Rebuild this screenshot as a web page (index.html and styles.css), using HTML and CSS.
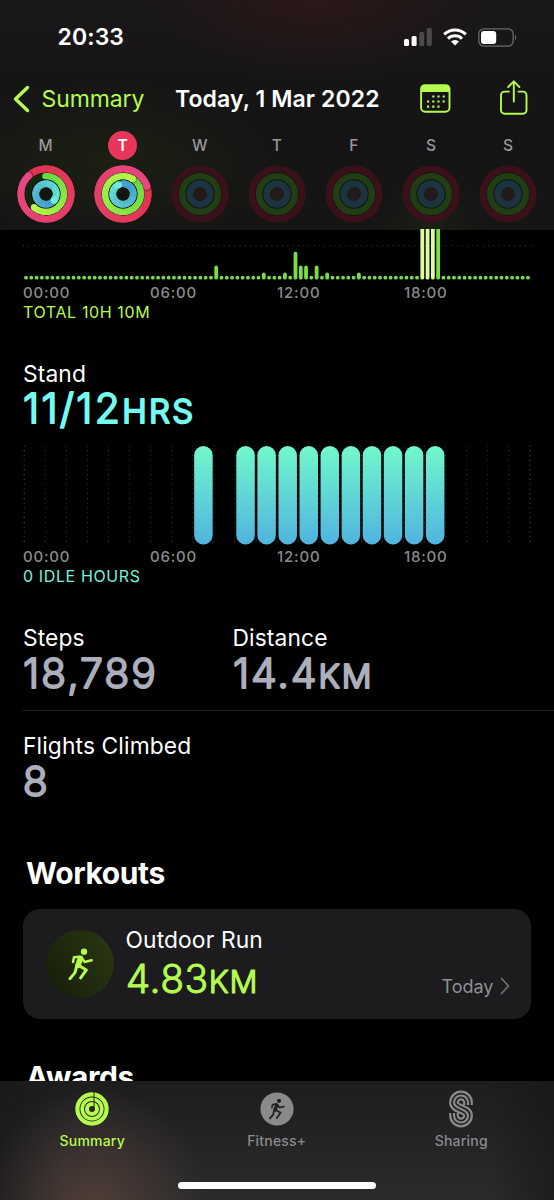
FILE: index.html
```html
<!DOCTYPE html>
<html lang="en">
<head>
<meta charset="utf-8">
<title>Activity</title>
<link rel="stylesheet" href="styles.css">
</head>
<body>
<svg width="0" height="0" class="defs">
  <symbol id="runner" viewBox="0 0 80 97">
    <circle cx="51" cy="11" r="9.5" fill="currentColor"/>
    <g fill="none" stroke="currentColor" stroke-linecap="round" stroke-linejoin="round">
      <path d="M40 31 L33 52" stroke-width="17"/>
      <path d="M37 26 L21 28 L18 42" stroke-width="7.5"/>
      <path d="M42 27 L53 42 L74 37" stroke-width="7.5"/>
      <path d="M36 53 L58 66 L41 90" stroke-width="9"/>
      <path d="M29 54 L24 74 L9 92" stroke-width="9"/>
    </g>
  </symbol>
</svg>
<div class="screen">
  <header class="header">
    <div class="status">
      <span class="time">20:33</span>
      <div class="status-icons">
        <svg width="28" height="18" viewBox="0 0 28 18"><rect x="0" y="11" width="5" height="7" rx="1.5" fill="#fff"/><rect x="7.6" y="8" width="5" height="10" rx="1.5" fill="#fff"/><rect x="15.2" y="4" width="5" height="14" rx="1.5" fill="#4b4949"/><rect x="22.8" y="0" width="5" height="18" rx="1.5" fill="#4b4949"/></svg>
        <svg class="wifi" width="24" height="18" viewBox="0 0 24 18"><g fill="none" stroke="#fff" stroke-width="3"><path d="M1.2 6.3 A15.5 15.5 0 0 1 22.8 6.3"/><path d="M5 10.6 A10 10 0 0 1 19 10.6"/></g><path d="M8 13.6 A5.7 5.7 0 0 1 16 13.6 L12 17.6 Z" fill="#fff"/></svg>
        <svg class="battery" width="40" height="19" viewBox="0 0 40 19"><rect x=".8" y=".8" width="34.4" height="17.4" rx="5.2" fill="none" stroke="#6c6a6a" stroke-width="1.3"/><rect x="3" y="3" width="15.2" height="13" rx="3" fill="#fff"/><path d="M37 6.5 q2.4 3 0 6z" fill="#6c6a6a"/></svg>
      </div>
    </div>
    <nav class="nav">
      <svg width="17" height="28" viewBox="0 0 17 28"><path d="M14.5 2.5 L2.5 14 L14.5 25.5" fill="none" stroke="#b5fb4e" stroke-width="3.4" stroke-linecap="round" stroke-linejoin="round"/></svg>
      <span class="back">Summary</span>
      <h1 class="title">Today, 1 Mar 2022</h1>
      <svg class="calendar" width="31" height="29" viewBox="0 0 31 29"><path d="M1 5 a4 4 0 0 1 4-4 h20.5 a4 4 0 0 1 4 4 V8 H1z" fill="#b5fb4e"/><rect x="1.1" y="1.1" width="28.4" height="26.6" rx="4" fill="none" stroke="#b5fb4e" stroke-width="1.9"/><g stroke="#b5fb4e" stroke-width="2.2" stroke-dasharray="2.2 3"><path d="M12.2 12.5 H25"/><path d="M7 17.5 H25"/><path d="M7 22.6 H19.5"/></g></svg>
      <svg class="share" width="28" height="35" viewBox="0 0 28 35" fill="none" stroke="#b5fb4e" stroke-width="1.9" stroke-linecap="round" stroke-linejoin="round"><path d="M9 11.6 H4.5 a3.5 3.5 0 0 0-3.5 3.5 V30.2 a3.5 3.5 0 0 0 3.5 3.5 H23 a3.5 3.5 0 0 0 3.5-3.5 V15.1 a3.5 3.5 0 0 0-3.5-3.5 H18.500"/><path d="M13.8 21.5 V1.5 M8.2 7 L13.8 1.3 L19.4 7"/></svg>
    </nav>
    <div class="week" id="week"></div>
  </header>

  <main class="content">
    <svg class="move-chart" id="move" width="554" height="53" viewBox="0 229 554 53"></svg>
    <div class="axis"><span>00:00</span><span>06:00</span><span>12:00</span><span>18:00</span></div>
    <p class="note note-move">TOTAL 10H 10M</p>

    <h3 class="label label-stand">Stand</h3>
    <svg class="value value-stand" width="240" height="50"><text x="0" y="34" textLength="170" lengthAdjust="spacing">11/12<tspan class="unit">HRS</tspan></text></svg>
    <svg class="stand-chart" id="stand" width="554" height="103" viewBox="0 444 554 103"></svg>
    <div class="axis axis-stand"><span>00:00</span><span>06:00</span><span>12:00</span><span>18:00</span></div>
    <p class="note note-stand">0 IDLE HOURS</p>

    <section class="stats">
      <div>
        <h3 class="label">Steps</h3>
        <svg class="value" width="200" height="50"><text x="0" y="34.5" textLength="133" lengthAdjust="spacing">18,789</text></svg>
      </div>
      <div>
        <h3 class="label">Distance</h3>
        <svg class="value" width="200" height="50"><text x="0" y="34.5" textLength="138.500" lengthAdjust="spacing">14.4<tspan class="unit">KM</tspan></text></svg>
      </div>
    </section>
    <section class="flights">
      <h3 class="label">Flights Climbed</h3>
      <svg class="value" width="200" height="50"><text x="-.3" y="35">8</text></svg>
    </section>

    <h2 class="heading heading-workouts">Workouts</h2>
    <article class="card">
      <div class="badge"><svg width="26.7" height="32.3"><use href="#runner"/></svg></div>
      <div class="workout">
        <h3 class="label">Outdoor Run</h3>
        <svg class="value value-run" width="180" height="46"><text x="-.2" y="37.5" textLength="131.500" lengthAdjust="spacing">4.83<tspan class="unit">KM</tspan></text></svg>
      </div>
      <div class="when"><span>Today</span><svg width="10" height="18" viewBox="0 0 10 18"><path d="M1.5 1.5 L8.5 9 L1.5 16.5" fill="none" stroke="#717176" stroke-width="1.7" stroke-linecap="round" stroke-linejoin="round"/></svg></div>
    </article>
    <h2 class="heading heading-awards">Awards</h2>
  </main>

  <footer class="tabbar">
    <div class="tabs">
      <div class="tab active">
        <svg width="38" height="38" viewBox="-19 -19 38 38"><g fill="none" stroke="#b5fb4e"><circle r="14.6" stroke-width="4.2"/><circle r="9.8" stroke-width="3.6"/><circle r="5" stroke-width="4"/></g><path d="M2 -17 V-1" stroke="#2b2725" stroke-width="1"/></svg>
        <span>Summary</span>
      </div>
      <div class="tab">
        <svg width="38" height="38" viewBox="-19 -19 38 38"><circle r="16.6" fill="#8a8a8d"/><use href="#runner" x="-9" y="-10.5" width="17.3" height="21" color="#232325"/></svg>
        <span>Fitness+</span>
      </div>
      <div class="tab">
        <svg width="38" height="38" viewBox="-7 -.5 38 38" fill="none"><path d="M19 14.5 V12 A7 7 0 0 0 5 12 C5 19 19 18 19 25 A7 7 0 0 1 5 25 V22.5" stroke="#8a8a8d" stroke-width="9.8"/><path d="M19 15 V12 A7 7 0 0 0 5 12 C5 19 19 18 19 25 A7 7 0 0 1 5 25 V22" stroke="#222223" stroke-width="5.4"/><path d="M19 14.5 V12 A7 7 0 0 0 5 12 C5 19 19 18 19 25 A7 7 0 0 1 5 25 V22.5" stroke="#8a8a8d" stroke-width="2.2"/></svg>
        <span>Sharing</span>
      </div>
    </div>
    <div class="home"></div>
  </footer>
</div>
<script src="app.js"></script>
</body>
</html>
```

FILE: styles.css
```css
* { box-sizing: border-box; }
body {
  margin: 0;
  background: #000;
  color: #fff;
  font-family: Inter, "Liberation Sans", sans-serif;
}
svg { display: block; flex: none; }
.defs { position: absolute; }
h1, h2, h3, p { margin: 0; font-weight: 400; }

.screen {
  width: 554px;
  height: 1200px;
  overflow: hidden;
  display: flex;
  flex-direction: column;
}

/* Header */
.header {
  flex: none;
  height: 230px;
  background:
    radial-gradient(ellipse 170px 80px at 315px 0, rgba(70, 26, 28, .4), transparent),
    radial-gradient(ellipse 180px 80px at 110px 160px, rgba(38, 50, 14, .4), transparent),
    radial-gradient(ellipse 60px 50px at 430px 225px, rgba(34, 44, 20, .4), transparent),
    linear-gradient(#1a1717, #141415 55%, #151515);
}
.status {
  display: flex;
  justify-content: space-between;
  align-items: center;
  height: 74px;
  padding: 0 36.5px 0 57.5px;
}
.time { font-size: 23px; font-weight: 600; letter-spacing: .1px; }
.status-icons { display: flex; align-items: center; }
.wifi { margin-left: 10.5px; }
.battery { margin-left: 11px; }
.nav {
  display: flex;
  align-items: center;
  height: 49px;
  padding-left: 12.5px;
}
.back {
  width: 133.5px;
  margin-left: 12px;
  font-size: 23px;
  letter-spacing: -.1px;
  color: #b5fb4e;
}
.title {
  width: 244.5px;
  font-size: 23px;
  font-weight: 600;
  letter-spacing: .1px;
  white-space: nowrap;
}
.calendar, .share { flex: none; }
.share { margin: 0 0 3px 49px; }
.week {
  display: grid;
  grid-template-columns: repeat(7, 77.1px);
  padding: 7.5px 0 0 7px;
}
.day { display: flex; flex-direction: column; align-items: center; }
.day-name {
  width: 29px;
  height: 29px;
  line-height: 29px;
  border-radius: 50%;
  text-align: center;
  font-size: 15.5px;
  font-weight: 500;
  color: #98989b;
}
.day-name.today { background: #e7365a; color: #fff; font-weight: 600; }
.rings { margin-top: 4px; }

/* Activity */
.content {
  position: relative;
  flex: none;
  height: 852px;
  margin-top: -1px;
  overflow: hidden;
}
.axis {
  display: grid;
  grid-template-columns: repeat(4, 127px);
  height: 20px;
  margin-top: 1px;
  padding-left: 23px;
  font-size: 15px;
  line-height: 20px;
  font-weight: 500;
  letter-spacing: .8px;
  color: #8b8b8e;
}
.axis-stand { margin-top: 0; }
.note {
  height: 21px;
  margin: -1px 0 0 23px;
  font-size: 16px;
  line-height: 21px;
  letter-spacing: .62px;
}
.note-move { color: #b5fb4e; }
.note-stand { color: #72f3da; }
.label {
  height: 30px;
  font-size: 22.8px;
  line-height: 30px;
  letter-spacing: .12px;
  white-space: nowrap;
}
.label-stand { margin: 36px 0 0 23px; }
.value { overflow: visible; }
.value text {
  font-size: 41px;
  font-weight: 300;
  fill: #acafbb;
  stroke: #acafbb;
  stroke-width: 1.9px;
  stroke-linejoin: round;
}
.value .unit { font-size: 33px; stroke-width: 2.2px; }
.value-stand { margin-left: 23px; }
.value-stand text { fill: #74fbf1; stroke: #74fbf1; }
.stand-chart { margin-top: 5px; }
.stats {
  display: grid;
  grid-template-columns: 209.5px 1fr;
  height: 124px;
  margin: 0 0 0 23px;
  padding-top: 36px;
  border-bottom: 1px solid #232325;
}
.flights { margin: 20px 0 0 23px; }
.heading {
  height: 40px;
  margin-left: 26px;
  font-size: 30px;
  line-height: 40px;
  font-weight: 700;
  letter-spacing: -.4px;
}
.heading-workouts { margin-top: 42px; }
.heading-awards { margin-top: 38px; }
.card {
  display: flex;
  width: 508px;
  height: 110px;
  margin: 16px 0 0 23px;
  padding-left: 23px;
  border-radius: 17px;
  background: #1c1c1e;
}
.badge {
  display: flex;
  align-items: center;
  justify-content: center;
  width: 68px;
  height: 68px;
  margin-top: 21px;
  border-radius: 50%;
  background: linear-gradient(60deg, #161c0a, #2b3813);
  color: #b5fb4e;
}
.workout { width: 316px; margin: 16px 0 0 11.5px; }
.value-run text { font-size: 39px; stroke-width: .9px; fill: #b5fb4e; stroke: #b5fb4e; }
.value-run .unit { font-size: 31px; stroke-width: 1.2px; }
.when {
  display: flex;
  align-items: center;
  height: 20px;
  margin-top: 67px;
  gap: 6px;
  font-size: 18px;
  color: #8e8e93;
}

/* Tab bar */
.tabbar {
  position: relative;
  flex: none;
  height: 119px;
  background:
    radial-gradient(ellipse 110px 120px at 95px 125px, rgba(104, 74, 62, .6), transparent),
    linear-gradient(90deg, rgba(24, 24, 25, .7), transparent 12%, transparent 88%, rgba(24, 24, 25, .7)),
    linear-gradient(#1d1d1e, #2b2b2d);
}
.tabs {
  display: grid;
  grid-template-columns: repeat(3, 184.5px);
  padding-top: 8.5px;
}
.tab { display: flex; flex-direction: column; align-items: center; color: #8a8a8d; }
.tab.active { color: #b5fb4e; }
.tab span {
  height: 20px;
  margin-top: 3px;
  font-size: 14px;
  line-height: 20px;
  font-weight: 500;
  letter-spacing: .2px;
}
.home {
  width: 198px;
  height: 7px;
  margin: 31.5px 0 0 178px;
  border-radius: 4px;
  background: #fff;
}
```

FILE: app.js
```js
const NS = 'http://www.w3.org/2000/svg';

function add(parent, name, attrs) {
  const el = document.createElementNS(NS, name);
  for (const key in attrs) el.setAttribute(key, attrs[key]);
  parent.appendChild(el);
  return el;
}

function point(r, deg) {
  const a = (deg - 90) * Math.PI / 180;
  return [r * Math.cos(a), r * Math.sin(a)];
}

function mix(a, b, t) {
  return 'rgb(' + a.map((v, i) => Math.round(v + (b[i] - v) * t)).join(',') + ')';
}

/* One activity ring: a track and a gradient arc with round ends. */
function ring(svg, r, width, track, from, to, start, end) {
  add(svg, 'circle', { r, fill: 'none', stroke: track, 'stroke-width': width });
  if (end === start) return;
  const step = 4;
  const cap = (deg, fill) => {
    const [cx, cy] = point(r, deg);
    add(svg, 'circle', { cx, cy, r: width / 2, fill });
  };
  const arc = (a, b, stroke) => {
    const [x1, y1] = point(r, a);
    const [x2, y2] = point(r, b);
    add(svg, 'path', {
      d: `M${x1} ${y1} A${r} ${r} 0 0 1 ${x2} ${y2}`,
      fill: 'none', 'stroke-width': width, stroke
    });
  };
  cap(start, mix(from, to, 0));
  const tail = 40;
  let shaded = end - start < 355;
  for (let d = start; d < end; d += step) {
    if (!shaded && d > end - tail) {
      cap(end + 4, 'rgba(0,0,0,.25)');
      shaded = true;
    }
    arc(d, Math.min(end, d + step + 2), mix(from, to, (d - start) / (end - start)));
  }
  cap(end, mix(from, to, 1));
}

const RED = [[224, 52, 78], [232, 72, 132]];
const GREEN = [[104, 218, 66], [184, 248, 76]];
const BLUE = [[72, 160, 212], [108, 238, 222]];
const week = [
  { name: 'M', move: [-44, 316], exercise: [-2, 222], stand: [-235, 130] },
  { name: 'T', today: true, move: [72, 432], exercise: [33, 393], stand: [0, 334] },
  { name: 'W' }, { name: 'T' }, { name: 'F' }, { name: 'S' }, { name: 'S' }
];

for (const day of week) {
  const cell = document.createElement('div');
  cell.className = 'day';
  const label = document.createElement('span');
  label.className = 'day-name' + (day.today ? ' today' : '');
  label.textContent = day.name;
  cell.appendChild(label);
  const svg = add(cell, 'svg', { class: 'rings', width: 60, height: 60, viewBox: '-30 -30 60 60' });
  const live = Boolean(day.move);
  add(svg, 'circle', { r: 23, fill: live ? '#080a07' : '#11160f' });
  ring(svg, 25.1, 6.8, live ? '#d8334c' : '#3a1118', ...RED, ...(day.move || [0, 0]));
  ring(svg, 17.9, 6.4, live ? '#14280f' : '#213d13', ...GREEN, ...(day.exercise || [0, 0]));
  ring(svg, 10.2, 7, live ? '#10242d' : '#1b343f', ...BLUE, ...(day.stand || [0, 0]));
  add(svg, 'circle', { r: 6.5, fill: live ? '#12160f' : '#241a1a' });
  document.getElementById('week').appendChild(cell);
}

/* Exercise minutes, one mark per quarter hour. */
const move = document.getElementById('move');
add(move, 'path', { d: 'M23 245.7 H532', stroke: '#3c3c3e', 'stroke-width': 1, 'stroke-dasharray': '1 4.284' });
const tops = { 36: 265.5, 45: 272.5, 49: 272.5, 51: 251.8, 52: 265.5, 53: 265.5, 55: 265.5, 57: 272.5, 63: 272.5, 75: 220, 76: 220, 77: 220, 78: 220 };
for (let i = 0; i < 96; i++) {
  const y = tops[i] || 275.8;
  const pale = i >= 75 && i <= 77;
  add(move, 'rect', {
    x: 26 + i * 5.284 - 1.9, y, width: 3.8, height: 279.6 - y, rx: 1.9,
    fill: pale ? '#dcfba0' : '#77de48'
  });
}

/* Stand hours. */
const stand = document.getElementById('stand');
const grad = add(add(stand, 'defs', {}), 'linearGradient', { id: 'standFill', x1: 0, y1: 0, x2: 0, y2: 1 });
add(grad, 'stop', { offset: 0, 'stop-color': '#72f8cc' });
add(grad, 'stop', { offset: 1, 'stop-color': '#50b3df' });
for (let h = 0; h <= 24; h++) {
  const x = 24.2 + h * 21.07;
  add(stand, 'path', { d: `M${x} 445.6 V542.5`, stroke: h % 24 ? '#3a3a3c' : '#59595c', 'stroke-width': 1, 'stroke-dasharray': '1 3.77' });
  if (h === 8 || (h >= 10 && h <= 19)) {
    add(stand, 'rect', { x: x + 1.4, y: 446, width: 18.5, height: 98.5, rx: 9.25, fill: 'url(#standFill)' });
  }
}
```
